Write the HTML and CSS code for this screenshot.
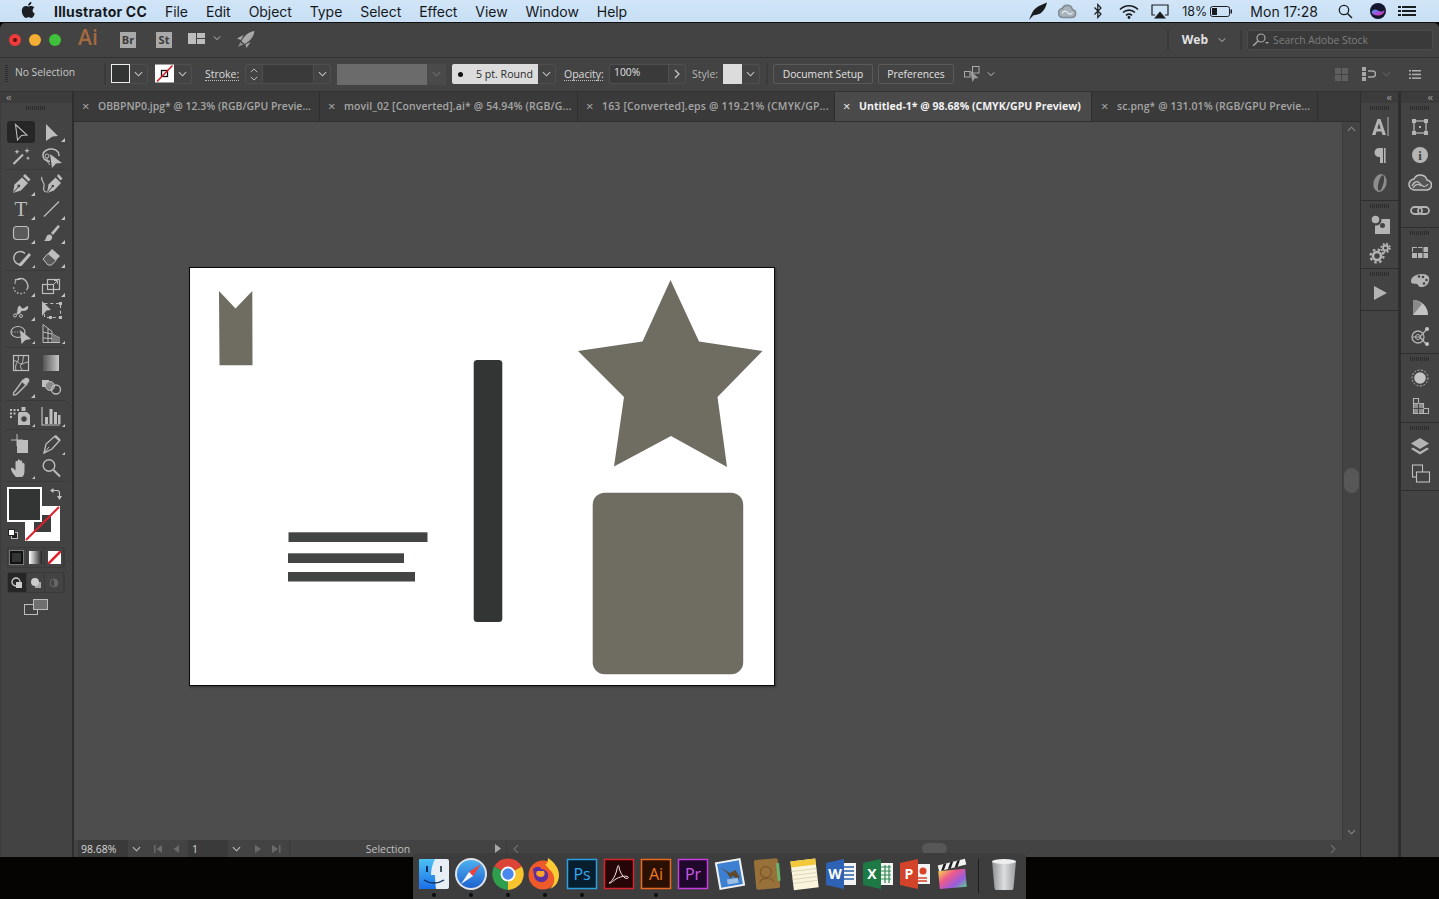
FILE: index.html
```html
<!DOCTYPE html>
<html lang="en">
<head>
<meta charset="utf-8">
<title>Illustrator CC</title>
<link rel="stylesheet" href="styles.css">
</head>
<body>
<svg class="defs" width="0" height="0" aria-hidden="true">
  <defs>
    <symbol id="chev" viewBox="0 0 10 6"><polyline points="1,1 5,5 9,1" fill="none" stroke="currentColor" stroke-width="1.2"/></symbol>
    <symbol id="tri" viewBox="0 0 4 4"><polygon points="4,0 4,4 0,4" fill="#c4c4c4"/></symbol>
    <linearGradient id="gradtool" x1="0" x2="1" y1="0" y2="0"><stop offset="0" stop-color="#555"/><stop offset="1" stop-color="#c8c8c8"/></linearGradient>
    <linearGradient id="rainbow" x1="0" x2="1" y1="0" y2="1"><stop offset="0" stop-color="#f8d24a"/><stop offset=".35" stop-color="#ee5a8a"/><stop offset=".7" stop-color="#9a5ce0"/><stop offset="1" stop-color="#5ad08a"/></linearGradient>
    <linearGradient id="siri" x1="0" x2="1" y1="0" y2="1"><stop offset="0" stop-color="#39a0ee"/><stop offset=".6" stop-color="#b048d8"/><stop offset="1" stop-color="#ee4a80"/></linearGradient>
    <linearGradient id="finderb" x1="0" x2="0" y1="0" y2="1"><stop offset="0" stop-color="#4cc2f5"/><stop offset="1" stop-color="#1a6fe8"/></linearGradient>
    <linearGradient id="safarib" x1="0" x2="0" y1="0" y2="1"><stop offset="0" stop-color="#4cb0f0"/><stop offset="1" stop-color="#1f62d0"/></linearGradient>
    <linearGradient id="trashg" x1="0" x2="1" y1="0" y2="0"><stop offset="0" stop-color="#8e9092"/><stop offset=".5" stop-color="#dcdedf"/><stop offset="1" stop-color="#9a9c9e"/></linearGradient>
  </defs>
</svg>

<header class="menubar">
  <svg class="apple" viewBox="0 0 14 16"><path d="M11.6 8.500c0-2 1.600-2.900 1.700-3-.9-1.400-2.400-1.600-2.900-1.600-1.200-.1-2.400.7-3 .7s-1.600-.7-2.600-.7C3.400 3.900 2.100 4.700 1.500 5.900.1 8.300 1.100 11.900 2.500 13.900c.7 1 1.500 2.100 2.500 2 1 0 1.400-.6 2.600-.6s1.500.6 2.600.6 1.800-1 2.500-2c.8-1.200 1.100-2.300 1.100-2.300s-2.200-.9-2.200-3.100zM9.600 2.600c.6-.7.9-1.600.8-2.600-.8 0-1.800.5-2.400 1.200-.5.6-1 1.600-.9 2.500.9.1 1.900-.4 2.500-1.100z" fill="#1b1f23"/></svg>
  <nav class="menus">
    <span class="appname">Illustrator CC</span>
    <span>File</span><span>Edit</span><span>Object</span><span>Type</span><span>Select</span><span>Effect</span><span>View</span><span>Window</span><span>Help</span>
  </nav>
  <div class="status-icons">
    <svg class="si-feather" viewBox="0 0 20 18"><path d="M1 18C3 14 4 9 8 6c3-2.500 7-3.500 11-5.500-1 4-2.500 8-6 10.500-2.500 1.800-5 1.600-7.500 2.300L1 18z" fill="#1a1d20"/></svg>
    <svg class="si-cc" viewBox="0 0 20 16"><path d="M6 14.500a4.500 4.500 0 0 1-.8-8.900 5.400 5.400 0 0 1 10.200.8 4.100 4.100 0 0 1-.9 8.100z" fill="#a8b2ba" stroke="#7f8a93" stroke-width="1.500"/><path d="M5 10.500c2-3 4-3 5.500-1s3.500 2.500 5 0" fill="none" stroke="#e4eef5" stroke-width="1.200"/></svg>
    <svg class="si-bt" viewBox="0 0 10 16"><polyline points="1.500,4.500 8,11 4.800,14.500 4.800,1.500 8,5 1.500,11.500" fill="none" stroke="#1a1d20" stroke-width="1.200"/></svg>
    <svg class="si-wifi" viewBox="0 0 20 15"><path d="M1 5.500c5-5 13-5 18 0M4 8.500c3.400-3.200 8.600-3.200 12 0M7 11.300c1.800-1.500 4.200-1.500 6 0" fill="none" stroke="#1a1d20" stroke-width="1.700"/><circle cx="10" cy="13.500" r="1.400" fill="#1a1d20"/></svg>
    <svg class="si-air" viewBox="0 0 18 15"><path d="M4 11H1V1h16v10h-3" fill="none" stroke="#1a1d20" stroke-width="1.200"/><polygon points="9,7.500 15,14.500 3,14.500" fill="#1a1d20"/></svg>
    <span class="pct">18%</span>
    <svg class="si-bat" viewBox="0 0 22 11"><rect x=".5" y=".5" width="19" height="10" rx="2" fill="none" stroke="#1a1d20"/><rect x="2" y="2" width="5" height="7" fill="#1a1d20"/><rect x="20.500" y="3.500" width="1.500" height="4" fill="#1a1d20"/></svg>
    <span class="clock">Mon 17:28</span>
    <svg class="si-search" viewBox="0 0 15 15"><circle cx="6" cy="6" r="4.700" fill="none" stroke="#1a1d20" stroke-width="1.300"/><line x1="9.500" y1="9.500" x2="14" y2="14" stroke="#1a1d20" stroke-width="1.500"/></svg>
    <svg class="si-siri" viewBox="0 0 16 16"><circle cx="8" cy="8" r="8" fill="#14162e"/><path d="M1.500 9c2-3 4-3 6.500-1.500S12 9 14.500 7c0 3-2.500 5.500-6.500 5.500S2 11 1.500 9z" fill="url(#siri)"/></svg>
    <svg class="si-list" viewBox="0 0 18 12"><g fill="#1a1d20"><rect x="0" y="1" width="3" height="2"/><rect x="4" y="1" width="14" height="2"/><rect x="0" y="5" width="3" height="2"/><rect x="4" y="5" width="14" height="2"/><rect x="0" y="9" width="3" height="2"/><rect x="4" y="9" width="14" height="2"/></g></svg>
  </div>
</header>

<main class="app">
  <div class="apphead">
    <span class="light red"><i></i></span><span class="light yellow"></span><span class="light green"></span>
    <span class="ai-logo">Ai</span>
    <span class="bridge br">Br</span>
    <span class="bridge st">St</span>
    <svg class="layout" viewBox="0 0 17 11"><g fill="#bdbdbd"><rect width="8" height="11"/><rect x="9" width="8" height="5"/><rect x="9" y="6" width="8" height="5"/></g></svg>
    <svg class="chev layout-chev"><use href="#chev"/></svg>
    <svg class="rocket" viewBox="0 0 18 17"><g fill="#a8a8a8"><path d="M17.500 0C11 1 7 5 4.500 10L7.500 13C12.500 10.500 16.500 6.500 17.500 0z"/><path d="M6.500 4L0 7.500 4 9z"/><path d="M13.500 11L9.500 17 8.500 13.500z"/></g><path d="M3.500 11L1 16 6.500 13.500z" fill="#8c8c8c"/></svg>
    <span class="spring"></span>
    <span class="vsep"></span>
    <span class="web">Web</span>
    <svg class="chev web-chev"><use href="#chev"/></svg>
    <span class="vsep sep2"></span>
    <div class="stock">
      <svg class="stock-ico" viewBox="0 0 17 13"><circle cx="9" cy="5" r="4" fill="none" stroke="#a8a8a8" stroke-width="1.200"/><line x1="6" y1="8" x2="1" y2="13" stroke="#a8a8a8" stroke-width="1.500"/><polygon points="13,9 17,9 15,11" fill="#a8a8a8"/></svg>
      <span>Search Adobe Stock</span>
    </div>
  </div>

  <div class="control">
    <span class="grip-v"></span>
    <span class="nosel">No Selection</span>
    <span class="csep"></span>
    <div class="combo m-fill"><span class="sw sw-dark"></span><span class="cbtn"><svg class="chev"><use href="#chev"/></svg></span></div>
    <div class="combo m-stroke"><svg class="sw sw-none" viewBox="0 0 19 18"><rect width="19" height="18" fill="#fff"/><rect x="6.500" y="6" width="6" height="6" fill="none" stroke="#111" stroke-width="1.300"/><line x1="2" y1="17" x2="17.500" y2="1" stroke="#d4202e" stroke-width="1.600"/></svg><span class="cbtn"><svg class="chev"><use href="#chev"/></svg></span></div>
    <span class="ulabel m-strokelabel">Stroke:</span>
    <div class="field m-spin">
      <span class="spin"><svg class="chev up"><use href="#chev"/></svg><svg class="chev"><use href="#chev"/></svg></span>
      <span class="fieldbody w51"></span>
      <span class="cbtn b-left"><svg class="chev"><use href="#chev"/></svg></span>
    </div>
    <div class="disabled-drop m-grey"><span class="greybox"></span><span class="greybtn"><svg class="chev"><use href="#chev"/></svg></span></div>
    <div class="brush m-brush"><span class="brushbody"><i></i>5 pt. Round</span><span class="cbtn"><svg class="chev"><use href="#chev"/></svg></span></div>
    <span class="ulabel m-oplabel">Opacity:</span>
    <div class="field m-op"><span class="fieldbody w57 optext">100%</span><span class="cbtn b-left"><svg class="right-ch" viewBox="0 0 6 10"><polyline points="1,1 5,5 1,9" fill="none" stroke="#ccc" stroke-width="1.200"/></svg></span></div>
    <span class="plain m-stylelabel">Style:</span>
    <div class="combo m-style"><span class="sw sw-light"></span><span class="cbtn"><svg class="chev"><use href="#chev"/></svg></span></div>
    <span class="csep m-sep3"></span>
    <span class="pbtn m-doc">Document Setup</span>
    <span class="pbtn m-pref">Preferences</span>
    <svg class="isolate" viewBox="0 0 16 16"><g fill="none" stroke="#aaa"><rect x="8.500" y=".5" width="6.500" height="6.500"/><rect x=".5" y="5.500" width="5.500" height="5.500"/></g><polygon points="6,4.500 14.500,12 10.500,12.500 8.500,16" fill="#9c9c9c"/></svg>
    <svg class="chev m-isochev"><use href="#chev"/></svg>
    <span class="spring"></span>
    <svg class="alignicon" viewBox="0 0 13 13"><g fill="#5f5f5f"><rect width="6" height="6"/><rect x="7" width="6" height="6"/><rect y="7" width="6" height="6"/><rect x="7" y="7" width="6" height="6"/></g></svg>
    <svg class="arrange" viewBox="0 0 14 14"><g fill="#a8a8a8"><rect width="4" height="4"/><rect y="5" width="4" height="4"/><rect y="10" width="4" height="4"/></g><path d="M6 4h4.500a3 3 0 0 1 0 6H6" fill="none" stroke="#a8a8a8" stroke-width="1.500"/></svg>
    <svg class="chev dim-chev"><use href="#chev"/></svg>
    <svg class="hamb" viewBox="0 0 12 9"><g fill="#b0b0b0"><rect width="2" height="1.500"/><rect x="3" width="9" height="1.500"/><rect y="3.700" width="2" height="1.500"/><rect x="3" y="3.700" width="9" height="1.500"/><rect y="7.400" width="2" height="1.500"/><rect x="3" y="7.400" width="9" height="1.500"/></g></svg>
  </div>

  <div class="work">
    <aside class="tooldock">
      <div class="collapse"><span>‹‹</span></div>
      <div class="toolpanel">
        <span class="grip"></span>
        <div class="tg g-first">
          <svg class="tool" viewBox="0 0 30 24"><rect x="1" y="1" width="28" height="22" rx="3" fill="#262626"/><polygon points="9.500,4.500 21,15 15.500,15.500 11.500,20" fill="none" stroke="#bdbdbd" stroke-width="1.100"/></svg>
          <svg class="tool" viewBox="0 0 30 24"><polygon points="10,4 22,16 16.500,16.500 10,21" fill="#bdbdbd"/><use href="#tri" x="25" y="18" width="4" height="4"/></svg>
          <svg class="tool" viewBox="0 0 30 24"><line x1="7.500" y1="19" x2="17" y2="9.500" stroke="#bdbdbd" stroke-width="2.200"/><g fill="#bdbdbd"><path d="M11 4l.7 2 2 .7-2 .7-.7 2-.7-2-2-.7 2-.7z"/><path d="M21 3l.7 2 2 .7-2 .7-.7 2-.7-2-2-.7 2-.7z"/><path d="M22 11l.6 1.600 1.600.6-1.600.6-.6 1.600-.6-1.600-1.600-.6 1.600-.6z"/></g></svg>
          <svg class="tool" viewBox="0 0 30 24"><path d="M14 16.500C9 16 6.500 13 7 9.500S12 3.500 16.500 4 23.500 8 23 11" fill="none" stroke="#bdbdbd" stroke-width="1.500"/><circle cx="11" cy="11" r="2" fill="none" stroke="#bdbdbd"/><path d="M11 13c0 3 1 5 3 7" fill="none" stroke="#bdbdbd"/><polygon points="14,9 26,18 20,18.500 16,23" fill="#bdbdbd"/></svg>
        </div>
        <div class="tg">
          <svg class="tool" viewBox="0 0 30 24"><path d="M7 20l1.500-8.500 7.500-7 6 5.500-7 7.500z" fill="#bdbdbd"/><path d="M17 3l2-2 5.500 5.500-2 2z" fill="#bdbdbd"/><line x1="7.500" y1="19.500" x2="12" y2="14" stroke="#424242"/><circle cx="12.800" cy="13" r="1.400" fill="#424242"/><use href="#tri" x="25" y="19" width="4" height="4"/></svg>
          <svg class="tool" viewBox="0 0 30 24"><path d="M11 20l1.500-8.500 7-7 5.500 5.500-7 7.500z" fill="#bdbdbd"/><path d="M21 3l1.500-2 4 4.500-2 2z" fill="#bdbdbd"/><line x1="11.500" y1="19.500" x2="16" y2="14" stroke="#424242"/><circle cx="16.800" cy="13" r="1.300" fill="#424242"/><path d="M6 4c-2 3 3 5 2 9s0 6 3 6" fill="none" stroke="#bdbdbd" stroke-width="1.200"/></svg>
          <svg class="tool" viewBox="0 0 30 24"><text x="15" y="19" class="t-tool">T</text><use href="#tri" x="25" y="19" width="4" height="4"/></svg>
          <svg class="tool" viewBox="0 0 30 24"><line x1="8" y1="19.500" x2="23" y2="4.500" stroke="#bdbdbd" stroke-width="1.300"/><use href="#tri" x="25" y="19" width="4" height="4"/></svg>
          <svg class="tool" viewBox="0 0 30 24"><rect x="7.500" y="5.500" width="15" height="13" rx="3" fill="#5a5a5a" stroke="#bdbdbd" stroke-width="1.200"/><use href="#tri" x="25" y="19" width="4" height="4"/></svg>
          <svg class="tool" viewBox="0 0 30 24"><path d="M15 12l7-8 2 1.500-7 8.500z" fill="#bdbdbd"/><path d="M8 20c2-1 1.500-4 3.500-6 1.500-1 4-.5 4.500 1s0 4-2.500 5z" fill="#bdbdbd"/><use href="#tri" x="25" y="19" width="4" height="4"/></svg>
          <svg class="tool" viewBox="0 0 30 24"><path d="M14 19.500a6.500 6.500 0 1 1 5-11" fill="none" stroke="#bdbdbd" stroke-width="1.400"/><path d="M13 19l10-11 2 2-9.500 11H13z" fill="#bdbdbd"/><use href="#tri" x="26" y="20" width="3" height="3"/></svg>
          <svg class="tool" viewBox="0 0 30 24"><path d="M7 14l9-10 8 7-8.500 9H12z" fill="#bdbdbd"/><path d="M7 14l5-5.500 8 7-4.500 4.500H12z" fill="#5a5a5a" stroke="#bdbdbd"/><use href="#tri" x="25" y="19" width="4" height="4"/></svg>
        </div>
        <div class="tg">
          <svg class="tool" viewBox="0 0 30 24"><path d="M9.500 5.500L9 10M9 5.500h5.500" stroke="#bdbdbd" fill="none"/><path d="M10 6c3-2 7-2 9.500.5S23 14 20.500 16" fill="none" stroke="#bdbdbd" stroke-width="1.400"/><path d="M19 18.500a8 8 0 0 1-10-1.500A8 8 0 0 1 7.500 12" fill="none" stroke="#bdbdbd" stroke-width="1.400" stroke-dasharray="1.500 1.800"/><use href="#tri" x="25" y="19" width="4" height="4"/></svg>
          <svg class="tool" viewBox="0 0 30 24"><rect x="6.500" y="10.500" width="11" height="9" fill="none" stroke="#bdbdbd" stroke-width="1.200"/><rect x="11.500" y="5.500" width="12" height="10" fill="none" stroke="#bdbdbd" stroke-width="1.200"/><path d="M17 11l4-4M18 6.500h3.500V10" fill="none" stroke="#bdbdbd"/><use href="#tri" x="25" y="19" width="4" height="4"/></svg>
          <svg class="tool" viewBox="0 0 30 24"><path d="M9 16c4 0 1-6 4-8 1.500-1 2 2 3.500 2.500S20 8 22 8c1 2-1 5-4 5-2 0-2-1-3 1s-3 3-6 2z" fill="#bdbdbd"/><circle cx="9" cy="17.500" r="1.500" fill="none" stroke="#bdbdbd"/><circle cx="15" cy="18" r="1.500" fill="none" stroke="#bdbdbd"/><use href="#tri" x="25" y="19" width="4" height="4"/></svg>
          <svg class="tool" viewBox="0 0 30 24"><polygon points="6,3 15,12 10.500,12.500 6,18" fill="#bdbdbd"/><rect x="8.500" y="5.500" width="16" height="14" fill="none" stroke="#bdbdbd" stroke-width="1.100" stroke-dasharray="3 2.800"/><g fill="#bdbdbd"><rect x="23" y="4" width="3" height="3"/><rect x="23" y="18" width="3" height="3"/><rect x="13" y="18" width="3" height="3"/></g></svg>
          <svg class="tool" viewBox="0 0 30 24"><ellipse cx="12" cy="10" rx="7" ry="5.500" fill="none" stroke="#bdbdbd" stroke-width="1.200"/><line x1="6" y1="10" x2="15" y2="10" stroke="#bdbdbd" stroke-dasharray="1 1.500"/><polygon points="14,8 25,17 19.500,18 15.500,22" fill="#bdbdbd"/><use href="#tri" x="26" y="19" width="3" height="3"/></svg>
          <svg class="tool" viewBox="0 0 30 24"><path d="M7 2.500v18h17M7 2.500l9 7v11M7 10l9 2 8 4M7 16l17 1M12 6v14.500" fill="none" stroke="#bdbdbd"/><path d="M16 12l8 4v4h-8z" fill="#7a7a7a"/><use href="#tri" x="26" y="19" width="3" height="3"/></svg>
        </div>
        <div class="tg">
          <svg class="tool" viewBox="0 0 30 24"><rect x="7.500" y="4.500" width="15" height="15" fill="none" stroke="#bdbdbd" stroke-width="1.200"/><path d="M7.500 10c4-1 5 3 8 3s3-2 7-2M12 4.500c1 4 0 6-1 7s-2 5-1 8M18 4.500c-2 4 0 6-2.500 8.500s0 4 1 6.500" fill="none" stroke="#bdbdbd"/></svg>
          <svg class="tool" viewBox="0 0 30 24"><rect x="7" y="4" width="16" height="16" fill="url(#gradtool)"/></svg>
          <svg class="tool" viewBox="0 0 30 24"><path d="M17 5l4 4-9 9c-1.500 1.500-3 2.500-4.500 2-.8-1.500.5-3 2-4.500z" fill="none" stroke="#bdbdbd" stroke-width="1.300"/><path d="M16 7l2-3c1-1.300 3-1.800 4.500-.5s.9 3.500-.5 4.500l-3 2z" fill="#bdbdbd"/><use href="#tri" x="25" y="19" width="4" height="4"/></svg>
          <svg class="tool" viewBox="0 0 30 24"><rect x="6" y="5" width="7" height="7" fill="#bdbdbd"/><circle cx="14" cy="11" r="4.500" fill="#888" stroke="#bdbdbd"/><circle cx="20" cy="14.500" r="4.500" fill="none" stroke="#bdbdbd" stroke-width="1.300"/></svg>
        </div>
        <div class="tg">
          <svg class="tool" viewBox="0 0 30 24"><g fill="#bdbdbd"><rect x="4" y="5" width="2" height="2"/><rect x="7.500" y="5" width="2" height="2"/><rect x="11" y="5" width="2" height="2"/><rect x="4" y="8.500" width="2" height="2"/><rect x="7.500" y="8.500" width="2" height="2"/><rect x="4" y="12" width="2" height="2"/></g><path d="M13 8h8l3 3v10H12V10z" fill="#bdbdbd"/><rect x="15.500" y="3" width="4" height="4" fill="#bdbdbd"/><circle cx="18" cy="15" r="3.300" fill="#424242" stroke="#bdbdbd"/><use href="#tri" x="26" y="20" width="3" height="3"/></svg>
          <svg class="tool" viewBox="0 0 30 24"><path d="M6 3v18h18" fill="none" stroke="#bdbdbd" stroke-width="1.200"/><g fill="#bdbdbd"><rect x="9" y="13" width="3" height="7"/><rect x="13.500" y="5" width="3" height="15"/><rect x="18" y="8" width="3" height="12"/><rect x="22" y="11" width="2.500" height="9"/></g><use href="#tri" x="26" y="20" width="3" height="3"/></svg>
        </div>
        <div class="tg g-last">
          <svg class="tool" viewBox="0 0 30 24"><path d="M11 2v12M5 8h12" fill="none" stroke="#bdbdbd"/><path d="M11 8h11v13H11z" fill="#bdbdbd"/></svg>
          <svg class="tool" viewBox="0 0 30 24"><path d="M8 21l2-9 9-8 5 4-8 9z" fill="none" stroke="#bdbdbd" stroke-width="1.300"/><path d="M18 5l5 4 1-2-4-4z" fill="#bdbdbd"/><path d="M8 21l5-6" stroke="#bdbdbd"/><use href="#tri" x="26" y="20" width="3" height="3"/></svg>
          <svg class="tool" viewBox="0 0 30 24"><path d="M10 21c-2-2-5-6-5-8 0-1.300 1.500-1.500 2.500-.5l2 2V6c0-1.500 2.200-1.500 2.200 0v5V4.500c0-1.500 2.300-1.500 2.300 0V11V5.500c0-1.500 2.300-1.500 2.300 0V11V8c0-1.500 2.200-1.500 2.200 0v6c0 4-1 7-3 7z" fill="#bdbdbd"/><use href="#tri" x="26" y="20" width="3" height="3"/></svg>
          <svg class="tool" viewBox="0 0 30 24"><circle cx="13" cy="9.500" r="5.800" fill="none" stroke="#bdbdbd" stroke-width="1.400"/><line x1="17.500" y1="14" x2="24" y2="20.500" stroke="#bdbdbd" stroke-width="2"/></svg>
        </div>
        <div class="fillstroke">
          <svg class="fs-stroke" viewBox="0 0 35 35"><rect width="35" height="35" fill="#fff"/><rect x="9" y="9" width="17" height="17" fill="#3c3e3e"/><line x1="1" y1="34" x2="34" y2="1" stroke="#e0202c" stroke-width="2"/></svg>
          <span class="fs-fill"></span>
          <svg class="fs-swap" viewBox="0 0 12 12"><path d="M2 2.500h5a2.500 2.500 0 0 1 2.500 2.500v4" fill="none" stroke="#c4c4c4" stroke-width="1.200"/><polygon points="3.500,0 3.500,5 0,2.500" fill="#c4c4c4"/><polygon points="7,8 12,8 9.500,12" fill="#c4c4c4"/></svg>
          <svg class="fs-def" viewBox="0 0 10 10"><rect x="3.500" y="3.500" width="6" height="6" fill="#222" stroke="#bbb"/><rect x=".5" y=".5" width="6" height="6" fill="#fff" stroke="#222"/></svg>
        </div>
        <div class="seg seg-color">
          <span class="segb"><span class="c-solid"></span></span>
          <span class="segb"><span class="c-grad"></span></span>
          <span class="segb"><svg class="c-none" viewBox="0 0 12 12"><rect width="12" height="12" fill="#fff"/><line x1="0" y1="12" x2="12" y2="0" stroke="#e0202c" stroke-width="2.400"/></svg></span>
        </div>
        <div class="seg seg-draw">
          <span class="segb on"><svg class="m-i" viewBox="0 0 12 12"><circle cx="5" cy="5" r="4" fill="none" stroke="#ccc" stroke-width="1.300"/><rect x="5" y="5" width="6" height="6" fill="#ccc"/></svg></span>
          <span class="segb"><svg class="m-i" viewBox="0 0 12 12"><rect x="5" y="5" width="6" height="6" fill="#aaa"/><circle cx="5" cy="5" r="4" fill="#ccc"/></svg></span>
          <span class="segb"><svg class="m-i" viewBox="0 0 12 12"><circle cx="6" cy="6" r="4" fill="none" stroke="#666"/><path d="M6 2a4 4 0 0 1 0 8z" fill="#666"/></svg></span>
        </div>
        <svg class="screenmode" viewBox="0 0 24 16"><rect x=".5" y="5.500" width="13" height="10" fill="none" stroke="#bdbdbd"/><rect x="9.500" y=".5" width="14" height="10" fill="#707070" stroke="#bdbdbd"/></svg>
      </div>
    </aside>

    <section class="center">
      <div class="tabs">
        <div class="tab t1"><span class="x">×</span><span>OBBPNP0.jpg* @ 12.3% (RGB/GPU Previe...</span></div>
        <div class="tab t2"><span class="x">×</span><span>movil_02 [Converted].ai* @ 54.94% (RGB/G...</span></div>
        <div class="tab t3"><span class="x">×</span><span>163 [Converted].eps @ 119.21% (CMYK/GP...</span></div>
        <div class="tab t4 active"><span class="x">×</span><span>Untitled-1* @ 98.68% (CMYK/GPU Preview)</span></div>
        <div class="tab t5"><span class="x">×</span><span>sc.png* @ 131.01% (RGB/GPU Previe...</span></div>
      </div>
      <div class="docarea">
        <div class="canvas">
          <div class="artboard">
            <svg class="art" viewBox="190 268 584 417">
              <polygon points="219,291 235.500,308.500 252.300,291 252.500,365.300 219.500,365.300" fill="#6f6c62"/>
              <rect x="288.500" y="532.300" width="139" height="9.700" fill="#434545"/>
              <rect x="288" y="553.300" width="116" height="9.700" fill="#434545"/>
              <rect x="288" y="572" width="127" height="9.500" fill="#434545"/>
              <rect x="473.700" y="360" width="28.600" height="262" rx="3.500" fill="#333534"/>
              <polygon points="670.500,280 699,341.500 762.500,351 717.500,397 727,467 671,436 614,466.500 624,397 578,351 642.500,341.500" fill="#6f6c62"/>
              <rect x="592.700" y="492.700" width="150.500" height="181.500" rx="12" fill="#6f6c62"/>
            </svg>
          </div>
        </div>
        <div class="vscroll">
          <svg class="chev sc-up"><use href="#chev"/></svg>
          <span class="vthumb"></span>
          <svg class="chev"><use href="#chev"/></svg>
        </div>
      </div>
      <div class="statusbar">
        <span class="st-zoom">98.68%</span>
        <span class="st-drop"><svg class="chev"><use href="#chev"/></svg></span>
        <svg class="st-nav" viewBox="0 0 34 10"><g fill="#6a6a6a"><rect x="1" y="1" width="1.500" height="8"/><polygon points="9,1 9,9 3.500,5"/><polygon points="26,1 26,9 20.500,5"/></g></svg>
        <span class="st-page">1</span>
        <span class="st-drop"><svg class="chev"><use href="#chev"/></svg></span>
        <svg class="st-nav2" viewBox="0 0 34 10"><g fill="#6a6a6a"><polygon points="5,1 5,9 11,5"/><polygon points="22,1 22,9 28,5"/><rect x="29" y="1" width="1.500" height="8"/></g></svg>
        <span class="st-mode">Selection</span>
        <svg class="st-play" viewBox="0 0 6 9"><polygon points="0,0 6,4.500 0,9" fill="#a8a8a8"/></svg>
        <span class="hscroll">
          <svg class="hleft" viewBox="0 0 6 10"><polyline points="5,1 1,5 5,9" fill="none" stroke="#6f6f6f" stroke-width="1.100"/></svg>
          <span class="hthumb"></span>
          <svg class="hright" viewBox="0 0 6 10"><polyline points="1,1 5,5 1,9" fill="none" stroke="#6f6f6f" stroke-width="1.100"/></svg>
        </span>
      </div>
    </section>

    <aside class="dockcol">
      <div class="collapse end"><span>‹‹</span></div>
      <div class="psec h97"><span class="grip"></span>
        <span class="pi"><svg viewBox="0 0 24 24"><path d="M4 20L9.500 4h3L18 20h-3.500l-1-3.500h-5L7.500 20zM9.300 13.800h3.400L11 8z" fill="#b4b4b4"/><rect x="19.500" y="2" width="1" height="19" fill="#b4b4b4"/></svg></span>
        <span class="pi"><svg viewBox="0 0 24 24"><path d="M15 5H11a4.500 4.500 0 0 0 0 9h1v6h3z" fill="#b4b4b4"/><rect x="16" y="5" width="1.600" height="15" fill="#b4b4b4"/></svg></span>
        <span class="pi"><svg viewBox="0 0 24 24"><ellipse cx="12" cy="12" rx="6.500" ry="9" transform="rotate(14 12 12)" fill="#8d8d8d"/><ellipse cx="13" cy="12" rx="2.500" ry="8" transform="rotate(14 13 12)" fill="#434343"/></svg></span>
      </div>
      <div class="psec h67"><span class="grip"></span>
        <span class="pi"><svg viewBox="0 0 24 24"><rect x="7" y="6" width="15" height="15" fill="#b4b4b4"/><circle cx="8" cy="7" r="5.500" fill="#434343"/><circle cx="7.500" cy="6.500" r="3.800" fill="#b4b4b4"/><circle cx="14.500" cy="12.500" r="2.500" fill="#434343"/></svg></span>
        <span class="pi"><svg viewBox="0 0 24 24"><circle cx="9" cy="15" r="6.500" fill="none" stroke="#b4b4b4" stroke-width="2.200" stroke-dasharray="2.600 2.500"/><circle cx="9" cy="15" r="4" fill="none" stroke="#b4b4b4" stroke-width="2.500"/><circle cx="17.500" cy="7" r="4.300" fill="none" stroke="#b4b4b4" stroke-width="1.800" stroke-dasharray="1.800 1.600"/><circle cx="17.500" cy="7" r="2.500" fill="none" stroke="#b4b4b4" stroke-width="1.800"/></svg></span>
      </div>
      <div class="psec h41"><span class="grip"></span>
        <span class="pi"><svg viewBox="0 0 24 24"><polygon points="6,5 19,12 6,19" fill="#b4b4b4"/></svg></span>
      </div>
      <div class="psec rest"></div>
    </aside>

    <aside class="dockcol second">
      <div class="collapse end"><span>‹‹</span></div>
      <div class="psec h124"><span class="grip"></span>
        <span class="pi"><svg viewBox="0 0 24 24"><rect x="6" y="6" width="12" height="12" fill="none" stroke="#b4b4b4" stroke-width="1.300"/><g fill="#b4b4b4"><rect x="4" y="4" width="4" height="4"/><rect x="16" y="4" width="4" height="4"/><rect x="4" y="16" width="4" height="4"/><rect x="16" y="16" width="4" height="4"/><rect x="11" y="11" width="2" height="2"/></g></svg></span>
        <span class="pi"><svg viewBox="0 0 24 24"><circle cx="12" cy="12" r="8" fill="#b4b4b4"/><text x="12" y="16.500" class="t-info">i</text></svg></span>
        <span class="pi"><svg viewBox="0 0 24 24"><path d="M7 19a5.500 5.500 0 0 1-1-11 7 7 0 0 1 13 1 5 5 0 0 1-1 10z" fill="#555" stroke="#c0c0c0" stroke-width="1.500"/><path d="M4 15c3-6 6-5 8-2.500s5 5 8 .5M5 17c3-5 6-4 8-2" fill="none" stroke="#c0c0c0" stroke-width="1.200"/></svg></span>
        <span class="pi"><svg viewBox="0 0 24 24"><rect x="3" y="8" width="11" height="7" rx="3.500" fill="none" stroke="#b4b4b4" stroke-width="1.800"/><rect x="10" y="8" width="11" height="7" rx="3.500" fill="none" stroke="#b4b4b4" stroke-width="1.800"/></svg></span>
      </div>
      <div class="psec h125"><span class="grip"></span>
        <span class="pi"><svg viewBox="0 0 24 24"><rect x="4" y="7" width="16" height="11" fill="#b4b4b4"/><g fill="#434343"><rect x="9" y="7" width="1" height="11"/><rect x="14.500" y="7" width="1" height="11"/><rect x="4" y="12" width="16" height="1"/><rect x="5" y="8" width="4" height="4"/><rect x="10" y="8" width="4.500" height="4"/></g></svg></span>
        <span class="pi"><svg viewBox="0 0 24 24"><path d="M3 13c0-4 5-7 11-7s8 3 7 7-4 6-8 6c-3 0-2-2-4-3s-6 1-6-3z" fill="#b4b4b4"/><g fill="#434343"><circle cx="15" cy="9" r="1.300"/><circle cx="18.500" cy="12" r="1.300"/><circle cx="16" cy="15.500" r="1.300"/><circle cx="11" cy="8.500" r="1.300"/></g></svg></span>
        <span class="pi"><svg viewBox="0 0 24 24"><path d="M5 4c9 0 15 7 15 15H5z" fill="#c4c4c4"/><path d="M5 4c4 0 7 2 9 4L5 19z" fill="#8a8a8a"/></svg></span>
        <span class="pi"><svg viewBox="0 0 24 24"><circle cx="10" cy="13" r="6" fill="none" stroke="#b4b4b4" stroke-width="1.300"/><circle cx="10" cy="13" r="2.500" fill="none" stroke="#b4b4b4"/><path d="M4 13h8l6-7M12 13l6 7" fill="none" stroke="#b4b4b4" stroke-width="1.200"/><circle cx="19" cy="5" r="2" fill="#c4c4c4"/><circle cx="19" cy="20" r="2" fill="#c4c4c4"/></svg></span>
      </div>
      <div class="psec h68"><span class="grip"></span>
        <span class="pi"><svg viewBox="0 0 24 24"><circle cx="12" cy="12" r="5.800" fill="#c4c4c4"/><circle cx="12" cy="12" r="8" fill="none" stroke="#b4b4b4" stroke-dasharray="2 1.500"/></svg></span>
        <span class="pi"><svg viewBox="0 0 24 24"><path d="M5.500 4.500h5v5h5v5h5v5h-15zM5.500 9.500h5v10M5.500 14.500h10v5" fill="none" stroke="#b4b4b4" stroke-width="1.100"/><rect x="6" y="10" width="9" height="9" fill="#8c8c8c"/><path d="M5.500 14.500h10M10.500 9.500v10" stroke="#434343"/></svg></span>
      </div>
      <div class="psec h67 tight"><span class="grip"></span>
        <span class="pi"><svg viewBox="0 0 24 24"><polygon points="12,5 21,10.500 12,16 3,10.500" fill="#b4b4b4"/><path d="M5 14.500l-2 1.500 9 5.500 9-5.500-2-1.500-7 4.300z" fill="#b4b4b4"/></svg></span>
        <span class="pi"><svg viewBox="0 0 24 24"><rect x="4.500" y="4" width="10" height="12" fill="none" stroke="#c0c0c0" stroke-width="1.100"/><rect x="8.500" y="11" width="13" height="10" fill="#434343" stroke="#c0c0c0" stroke-width="1.100"/></svg></span>
      </div>
      <div class="psec rest"></div>
    </aside>
  </div>
</main>

<footer class="dock">
  <div class="di"><svg viewBox="0 0 34 34"><rect x="2" y="2" width="30" height="30" rx="2" fill="#e8eef5"/><path d="M4 2h14c-3 6-4 11-4 16h4c0 5 .5 9 1 14H4a2 2 0 0 1-2-2V4a2 2 0 0 1 2-2z" fill="url(#finderb)"/><rect x="9" y="9" width="2" height="6" fill="#10305c"/><rect x="23" y="9" width="2" height="6" fill="#44505c"/><path d="M7 23c6 4 14 4 20 0" fill="none" stroke="#10305c" stroke-width="1.500"/></svg><i class="dot"></i></div>
  <div class="di"><svg viewBox="0 0 34 34"><circle cx="17" cy="17" r="16" fill="#dfe3e8"/><circle cx="17" cy="17" r="14" fill="url(#safarib)"/><polygon points="27,7 19,19 15,15" fill="#f2413a"/><polygon points="7,27 19,19 15,15" fill="#f4f4f4"/></svg><i class="dot"></i></div>
  <div class="di"><svg viewBox="0 0 34 34"><path d="M17 17L3.100 9.500A16 16 0 0 1 30.900 9.500z" fill="#dc4437"/><path d="M17 17L3.100 9.500A16 16 0 0 0 17 33z" fill="#2f9e4d"/><path d="M17 17L30.900 9.500A16 16 0 0 1 17 33z" fill="#f6c42d"/><circle cx="17" cy="17" r="7.500" fill="#fff"/><circle cx="17" cy="17" r="5.700" fill="#4a88ee"/></svg><i class="dot"></i></div>
  <div class="di"><svg viewBox="0 0 34 34"><circle cx="15" cy="18" r="14.500" fill="#ef5a2a"/><path d="M20 1c6 4 11 10 11 17 0 7-4 12-9 14 3-3 5-7 4-12-1-6-6-8-9-13 2 1 3-3 3-6z" fill="#fbcb36"/><path d="M5 12c3-3 8-3 8 0 2 0 6 1 7 5 1 5-3 9-8 8-4-1-6-4-6-7z" fill="#5b2f9e"/><path d="M9 14h7c1 2 1 5-2 6-3 .5-5-1-6-3z" fill="#f6a32c"/></svg><i class="dot"></i></div>
  <div class="di"><svg viewBox="0 0 34 34"><rect x="2.500" y="2.500" width="29" height="29" fill="#061e2e" stroke="#2d9fe0" stroke-width="1.500"/><text x="17" y="23" class="t-app ps">Ps</text></svg><i class="dot"></i></div>
  <div class="di"><svg viewBox="0 0 34 34"><rect x="2.500" y="2.500" width="29" height="29" fill="#260506" stroke="#d6252c" stroke-width="1.500"/><path d="M7 26c4-2 7-9 8-14 .5-3 1.500-5 2-2 .5 4 3 9 6 11 2 1 4 0 3-1-2-2-9 0-12 2-3 2-6 5-7 4z" fill="none" stroke="#f2e6e6" stroke-width="1"/></svg></div>
  <div class="di"><svg viewBox="0 0 34 34"><rect x="2.500" y="2.500" width="29" height="29" fill="#2b1002" stroke="#ec6a1e" stroke-width="1.500"/><text x="17" y="23" class="t-app ai">Ai</text></svg><i class="dot"></i></div>
  <div class="di"><svg viewBox="0 0 34 34"><rect x="2.500" y="2.500" width="29" height="29" fill="#20082c" stroke="#c63fdc" stroke-width="1.500"/><text x="17" y="23" class="t-app pr">Pr</text></svg></div>
  <div class="di"><svg viewBox="0 0 34 34"><g transform="rotate(-10 17 17)"><rect x="4" y="3" width="26" height="28" fill="#f2f2f2"/><rect x="6" y="5" width="22" height="24" fill="#3d7fd0"/><path d="M9 9l8 7 6-2 3 7-2 3-5-5-2 3-3-7z" fill="#5e4a30"/><path d="M13 22h11v5H13z" fill="#9dbfe4"/></g></svg></div>
  <div class="di"><svg viewBox="0 0 34 34"><g transform="rotate(-5 17 17)"><rect x="5" y="2" width="24" height="30" rx="2" fill="#98703a"/><rect x="27" y="7" width="3" height="18" fill="#6bb46e"/><circle cx="16" cy="15" r="5.500" fill="none" stroke="#7b582a" stroke-width="1.200"/><path d="M9 25c2-5 12-5 14 0" fill="none" stroke="#7b582a" stroke-width="1.200"/></g></svg></div>
  <div class="di"><svg viewBox="0 0 34 34"><g transform="rotate(-7 17 17)"><rect x="5" y="3" width="25" height="29" fill="#faf5dc"/><rect x="5" y="3" width="25" height="6" fill="#f2c93a"/><path d="M5 13h25M5 17h25M5 21h25M5 25h25" stroke="#dcd6b8"/></g></svg></div>
  <div class="di"><svg viewBox="0 0 34 34"><rect x="17" y="6" width="15" height="22" fill="#f4f4f4"/><path d="M19 10h11M19 14h11M19 18h11M19 22h11" stroke="#2a5da8" stroke-width="1.600"/><polygon points="2,6 20,2 20,32 2,28" fill="#2d62b4"/><text x="11" y="22" class="t-doc">W</text></svg></div>
  <div class="di"><svg viewBox="0 0 34 34"><rect x="17" y="6" width="15" height="22" fill="#f4f4f4"/><path d="M19 10h11M19 14h11M19 18h11M19 22h11M24 8v18M28 8v18" stroke="#2e8a50" stroke-width="1.200"/><polygon points="2,6 20,2 20,32 2,28" fill="#1e7a45"/><text x="11" y="22" class="t-doc">X</text></svg></div>
  <div class="di"><svg viewBox="0 0 34 34"><rect x="17" y="7" width="15" height="20" fill="#f4f4f4"/><circle cx="25" cy="14" r="3.500" fill="#d8432a"/><path d="M20 21h9M20 24h9" stroke="#d8432a" stroke-width="1.300"/><polygon points="2,6 20,2 20,32 2,28" fill="#d2432a"/><text x="11" y="22" class="t-doc">P</text></svg></div>
  <div class="di"><svg viewBox="0 0 34 34"><rect x="4" y="13" width="27" height="18" fill="url(#rainbow)" transform="rotate(-5 17 22)"/><g transform="rotate(-14 17 8)"><rect x="3" y="5" width="28" height="6" fill="#f2f2f2"/><path d="M5 11l4-6h3l-4 6zM12 11l4-6h3l-4 6zM19 11l4-6h3l-4 6z" fill="#1e1e1e"/></g></svg></div>
  <span class="docksep"></span>
  <div class="di"><svg viewBox="0 0 34 34"><path d="M5 4h24l-2.500 27c-.2 1.500-1 2-2 2H9.500c-1 0-1.800-.5-2-2z" fill="url(#trashg)"/><ellipse cx="17" cy="4.500" rx="12" ry="2.500" fill="#eceeef"/></svg></div>
</footer>
</body>
</html>
```

FILE: styles.css
```css
* { box-sizing: border-box; }
html, body { margin: 0; padding: 0; }
body {
  width: 1439px;
  height: 899px;
  overflow: hidden;
  position: relative;
  background: #050403;
  font-family: "Open Sans", "Liberation Sans", sans-serif;
  font-size: 10.300px;
  color: #c8c8c8;
}
svg { display: block; flex: none; }
.defs { position: absolute; }
.spring { flex: 1; }
.chev { width: 9px; height: 6px; color: #c4c4c4; }

/* macOS menu bar */
.menubar {
  height: 23px;
  display: flex;
  align-items: center;
  background: linear-gradient(#d1e5f7, #c8dff4);
  border-bottom: 1px solid #111;
  color: #16191c;
  font-family: Inter, "Liberation Sans", sans-serif;
  font-size: 14px;
  padding-left: 21px;
}
.apple { width: 14px; height: 16px; margin-top: -3px; }
.menus { display: flex; gap: 18px; margin-left: 19px; white-space: nowrap; letter-spacing: -.06px; }
.appname { font-weight: 700; letter-spacing: .2px; }
.status-icons { margin-left: auto; display: flex; align-items: center; margin-right: 23px; }
.si-feather { width: 20px; height: 18px; }
.si-cc { width: 20px; height: 16px; margin-left: 9px; }
.si-bt { width: 10px; height: 16px; margin-left: 16px; }
.si-wifi { width: 20px; height: 15px; margin-left: 16px; }
.si-air { width: 18px; height: 15px; margin-left: 12px; }
.pct { font-size: 12.500px; margin-left: 13px; }
.si-bat { width: 22px; height: 11px; margin-left: 3px; }
.clock { margin-left: 18px; }
.si-search { width: 15px; height: 15px; margin-left: 20px; }
.si-siri { width: 16px; height: 16px; margin-left: 17px; }
.si-list { width: 18px; height: 12px; margin-left: 12px; }

/* window */
.app {
  height: 834px;
  display: flex;
  flex-direction: column;
  background: #434343;
  border-radius: 5px 5px 0 0;
  overflow: hidden;
}
.apphead {
  height: 35px;
  flex: none;
  display: flex;
  align-items: center;
  border-bottom: 1px solid #333;
  padding: 0 0 1px 9px;
}
.light { width: 12px; height: 12px; border-radius: 50%; margin-right: 8px; display: flex; align-items: center; justify-content: center; }
.red { background: #ee3b3c; }
.red i { width: 4px; height: 4px; border-radius: 50%; background: #5c0d0d; }
.yellow { background: #f4ae33; }
.green { background: #3fc13c; }
.ai-logo { font-size: 21px; font-weight: 600; color: #a5693f; margin-left: 9px; width: 42px; line-height: 1; margin-top: -4px; }
.bridge { width: 16px; height: 16px; background: #a9a9a9; color: #3a3a3a; font-weight: 700; font-size: 11px; line-height: 16px; text-align: center; }
.st { margin-left: 20px; }
.layout { width: 17px; height: 11px; margin-left: 16px; margin-top: -3px; }
.layout-chev { margin-left: 8px; margin-top: -3px; width: 8px; }
.rocket { width: 18px; height: 17px; margin-left: 16px; }
.vsep { width: 2px; height: 20px; background: #3a3a3a; }
.web { font-weight: 700; font-size: 12px; color: #e2e2e2; margin-left: 13px; }
.web-chev { margin-left: 10px; width: 8px; }
.sep2 { margin-left: 14px; }
.stock {
  width: 186px;
  height: 20px;
  margin: 0 6px 0 5px;
  background: #3a3a3a;
  border: 1px solid #4b4b4b;
  border-radius: 2px;
  display: flex;
  align-items: center;
  padding-left: 4px;
  color: #7d7d7d;
}
.stock-ico { width: 17px; height: 13px; margin-right: 4px; }

/* control bar */
.control {
  height: 34px;
  flex: none;
  display: flex;
  align-items: center;
  border-bottom: 1px solid #333;
  padding: 0 18px 1px 5px;
  white-space: nowrap;
  color: #d4d4d4;
}
.grip-v { width: 3px; height: 18px; background: repeating-linear-gradient(#2e2e2e 0 1px, transparent 1px 2px); }
.nosel { width: 89px; margin-left: 7px; margin-bottom: 4px; color: #c8c8c8; }
.csep { width: 2px; height: 22px; background: #3b3b3b; margin-right: 5px; }
.combo { display: flex; height: 20px; align-items: stretch; }
.sw { display: block; width: 19px; height: 19px; }
.sw-dark { background: #333535; border: 1px solid #eee; }
.sw-light { background: #dcdcdc; }
.cbtn {
  width: 18px;
  height: 20px;
  display: flex;
  align-items: center;
  justify-content: center;
  border: 1px solid #4f4f4f;
  border-left: 0;
  border-radius: 0 3px 3px 0;
}
.b-left { border-left: 1px solid #4f4f4f; }
.m-fill { margin-left: 0; }
.m-stroke { margin-left: 7px; }
.ulabel { font-size: 10.500px; color: #dcdcdc; border-bottom: 1px dotted #bbb; line-height: 12px; }
.m-strokelabel { margin-left: 13px; width: 34px; }
.field { display: flex; height: 20px; border-radius: 3px; }
.m-spin { margin-left: 6px; }
.spin { width: 18px; height: 20px; border: 1px solid #4f4f4f; border-radius: 3px 0 0 3px; display: flex; flex-direction: column; justify-content: center; gap: 3px; align-items: center; }
.spin .chev { width: 8px; height: 5px; }
.up { transform: scaleY(-1); }
.fieldbody { height: 20px; background: #3a3a3a; border: 1px solid #4f4f4f; border-left: 0; border-right: 0; display: block; }
.w51 { width: 50px; }
.w57 { width: 59px; border-left: 1px solid #4f4f4f; border-radius: 3px 0 0 3px; }
.optext { padding-left: 4px; line-height: 15px; color: #e0e0e0; }
.disabled-drop { display: flex; height: 21px; }
.m-grey { margin-left: 6px; }
.greybox { width: 90px; background: #6b6b6b; }
.greybtn { width: 19px; background: #4a4a4a; display: flex; align-items: center; justify-content: center; }
.greybtn .chev { color: #6d6d6d; }
.brush { display: flex; height: 20px; }
.m-brush { margin-left: 6px; }
.brushbody { width: 86px; background: #dcdcdc; color: #2a2a2a; font-size: 10.600px; display: flex; align-items: center; padding-left: 6px; border-radius: 2px 0 0 2px; }
.brushbody i { width: 5px; height: 5px; border-radius: 50%; background: #111; margin-right: 13px; }
.m-oplabel { margin-left: 8px; width: 39px; }
.m-op { margin-left: 6px; }
.right-ch { width: 6px; height: 10px; }
.plain { color: #b8b8b8; font-size: 10.500px; }
.m-stylelabel { margin-left: 6px; width: 31px; }
.m-style { margin-left: 0; }
.m-style .sw { height: 20px; }
.m-sep3 { margin-left: 6px; margin-right: 5px; }
.pbtn { height: 20px; border: 1px solid #5a5a5a; border-radius: 2px; display: flex; align-items: center; justify-content: center; color: #e2e2e2; }
.m-doc { width: 100px; }
.m-pref { width: 76px; margin-left: 5px; }
.isolate { width: 16px; height: 16px; margin-left: 10px; }
.m-isochev { margin-left: 7px; width: 8px; }
.alignicon { width: 13px; height: 13px; }
.arrange { width: 14px; height: 14px; margin-left: 14px; }
.dim-chev { color: #5f5f5f; margin-left: 6px; }
.hamb { width: 12px; height: 9px; margin-left: 18px; }

/* work area */
.work { flex: 1; min-height: 0; display: flex; background: #2e2e2e; }
.tooldock { width: 72px; flex: none; display: flex; flex-direction: column; margin-right: 2px; background: #3c3c3c; }
.collapse { height: 11px; flex: none; background: #3c3c3c; color: #a0a0a0; font-size: 11px; line-height: 9px; padding-left: 6px; letter-spacing: -1px; }
.collapse.end { text-align: right; padding: 0 7px 0 0; }
.toolpanel { flex: 1; background: #434343; display: flex; flex-direction: column; align-items: flex-start; margin-left: 1px; padding-left: 5px; }
.grip { display: block; flex: none; width: 20px; height: 4px; margin: 3px auto; background: repeating-linear-gradient(90deg, #2c2c2c 0 1px, transparent 1px 2px); }
.toolpanel .grip { margin: 3px 0 0 20px; }
.tg {
  width: 60px;
  display: grid;
  grid-template-columns: 30px 30px;
  grid-auto-rows: 24px;
  padding: 3px 0 1px;
  border-bottom: 1px solid #3a3a3a;
}
.g-first { margin-top: 10px; padding: 0; grid-auto-rows: 24.500px; }
.g-last { padding: 2px 0 1px; }
.tool { width: 30px; height: 24px; }
.t-tool { font-family: "Liberation Serif", serif; font-size: 21px; fill: #bdbdbd; text-anchor: middle; font-weight: 400; }
.t-info { font-family: "Liberation Serif", serif; font-size: 13px; font-weight: 700; fill: #434343; text-anchor: middle; }

.fillstroke { position: relative; width: 60px; height: 58px; flex: none; }
.fs-fill { position: absolute; left: 1px; top: 5px; width: 35px; height: 35px; background: #333535; border: 2px solid #fff; }
.fs-stroke { position: absolute; left: 19px; top: 24px; width: 35px; height: 35px; }
.fs-swap { position: absolute; left: 44px; top: 6px; width: 12px; height: 12px; }
.fs-def { position: absolute; left: 2px; top: 47px; width: 10px; height: 10px; }
.seg { width: 58px; height: 21px; margin-left: 1px; border: 1px solid #3a3a3a; border-radius: 3px; display: flex; flex: none; }
.seg-color { margin-top: 7px; }
.seg-draw { margin-top: 4px; }
.segb { flex: 1; display: flex; align-items: center; justify-content: center; border-right: 1px solid #3a3a3a; }
.segb.on { background: #262626; }
.c-solid { width: 13px; height: 13px; background: #333535; border: 2px solid #111; outline: 1px solid #777; }
.c-grad { width: 13px; height: 13px; background: linear-gradient(90deg, #fff, #222); }
.c-none { width: 13px; height: 13px; }
.m-i { width: 12px; height: 12px; }
.screenmode { width: 24px; height: 16px; margin: 6px 0 0 18px; }

/* tabs and canvas */
.center { width: 1286px; flex: none; display: flex; flex-direction: column; min-height: 0; }
.tabs { height: 30px; flex: none; display: flex; background: #3a3a3a; border-bottom: 1px solid #2f2f2f; }
.tab {
  display: flex;
  align-items: center;
  flex: none;
  border-right: 1px solid #2e2e2e;
  padding: 0 0 2px 8px;
  color: #a6a6a6;
  font-weight: 600;
  font-size: 10.450px;
  white-space: nowrap;
}
.tab .x { width: 16px; font-size: 13px; font-weight: 400; color: #aaa; letter-spacing: 0; }
.t1 { width: 246px; }
.t2 { width: 258px; letter-spacing: .14px; }
.t3 { width: 257px; letter-spacing: .2px; }
.t4 { width: 257px; }
.t5 { width: 226px; padding-left: 9px; letter-spacing: .09px; }
.active { background: #4a4a4a; color: #f2f2f2; font-weight: 700; font-size: 10.550px; }
.active .x { color: #eee; }
.docarea { flex: 1; min-height: 0; display: flex; }
.canvas { flex: 1; background: #4d4d4d; padding: 145px 0 0 115px; }
.artboard { width: 586px; height: 419px; background: #fff; border: 1px solid #0a0a0a; box-shadow: 1px 1px 2px #333; }
.art { width: 584px; height: 417px; }
.vscroll { width: 18px; flex: none; background: #434343; border-left: 1px solid #3c3c3c; display: flex; flex-direction: column; align-items: center; justify-content: space-between; padding: 4px 0 5px; position: relative; }
.sc-up { transform: scaleY(-1); color: #8a8a8a; }
.vscroll .chev { color: #8a8a8a; }
.vthumb { position: absolute; top: 346px; left: 1px; width: 15px; height: 25px; background: #575757; border-radius: 8px; }
.statusbar { height: 17px; flex: none; display: flex; align-items: center; background: #434343; padding-left: 4px; white-space: nowrap; color: #d8d8d8; }
.st-zoom { width: 50px; height: 17px; background: #3a3a3a; line-height: 18px; padding-left: 3px; font-size: 10.500px; }
.st-drop { width: 18px; display: flex; justify-content: center; }
.st-drop .chev { margin-left: -1px; }
.st-nav { width: 34px; height: 10px; margin-left: 7px; }
.st-page { width: 40px; height: 17px; background: #3a3a3a; line-height: 18px; padding-left: 4px; margin-left: 1px; font-size: 10.500px; }
.st-nav2 { width: 34px; height: 10px; margin-left: 4px; }
.st-mode { width: 200px; margin-left: 5px; height: 17px; border-left: 1px solid #3c3c3c; line-height: 19px; text-align: center; color: #c0c0c0; font-size: 10.500px; padding-right: 3px; }
.st-play { width: 6px; height: 9px; margin-left: 6px; }
.hscroll { flex: 1; height: 17px; margin-left: 5px; border-left: 1px solid #3a3a3a; display: flex; align-items: center; padding: 0 24px 0 6px; }
.hleft, .hright { width: 6px; height: 10px; }
.hthumb { width: 25px; height: 11px; border-radius: 6px; background: #575757; margin-left: 403px; margin-right: auto; }

/* right docks */
.dockcol { width: 37px; flex: none; margin-left: 1px; display: flex; flex-direction: column; gap: 1px; }
.dockcol.second { width: 38px; margin-left: 3px; }
.dockcol .collapse { margin-bottom: -1px; }
.psec { background: #434343; flex: none; display: flex; flex-direction: column; align-items: center; }
.tight .grip { margin: 3px auto 1px; }
.h97 { height: 97px; }
.h67 { height: 67px; }
.h41 { height: 41px; }
.h124 { height: 124px; }
.h125 { height: 125px; }
.h68 { height: 68px; }
.rest { flex: 1; }
.pi { width: 24px; height: 28px; display: flex; align-items: center; justify-content: center; flex: none; }
.pi svg { width: 24px; height: 24px; }

/* macOS dock */
.dock {
  position: absolute;
  left: 413px;
  top: 853px;
  width: 613px;
  height: 46px;
  background: #3d3d3d;
  border-radius: 5px 5px 0 0;
  display: flex;
  padding: 4px 0 0 2.500px;
}
.di { width: 37px; flex: none; display: flex; flex-direction: column; align-items: center; }
.di svg { width: 34px; height: 34px; }
.dot { width: 4px; height: 4px; border-radius: 50%; background: #0c0c0c; margin-top: 2px; }
.docksep { width: 1px; height: 34px; margin: 2px 7px 0; background: #1f1f1f; flex: none; }
.t-app { font-family: "Open Sans", sans-serif; font-size: 16px; font-weight: 400; text-anchor: middle; }
.ps { fill: #38a8ee; }
.ai { fill: #f07a1e; }
.pr { fill: #cc5ce8; }
.t-doc { font-family: "Open Sans", sans-serif; font-size: 14px; font-weight: 700; fill: #fff; text-anchor: middle; }
```
